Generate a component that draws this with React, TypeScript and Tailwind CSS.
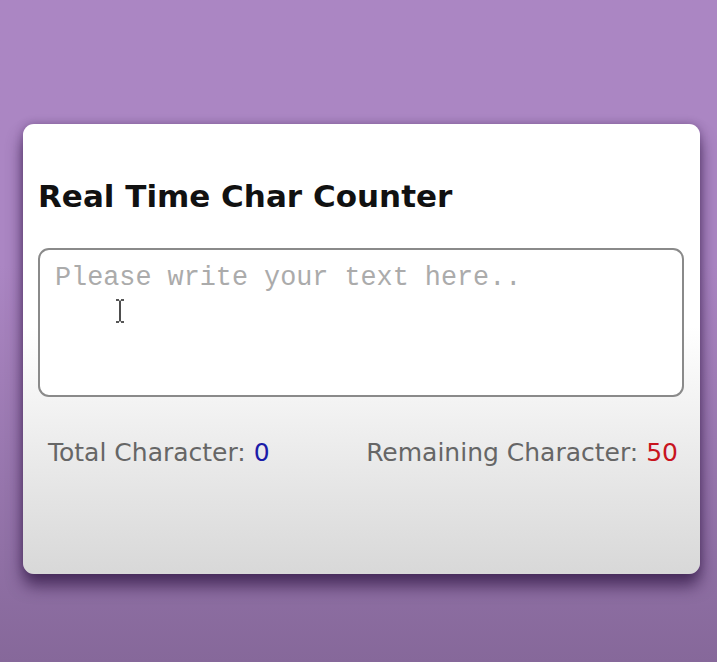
import React, { useState } from "react";

export default function App() {
  const [text, setText] = useState("");
  const max = 50;
  return (
    <div className="w-[717px] h-[662px] overflow-hidden bg-gradient-to-b from-[#ab86c3] from-40% to-[#86689a] pt-[124px] pl-[23px]">
      <div
        className="relative w-[677px] h-[450px] rounded-[11px] bg-gradient-to-b from-white from-45% to-[#d8d8d8] shadow-[0_12px_16px_rgba(45,20,65,0.7),0_0_8px_rgba(60,30,80,0.35)] pt-[52px] px-[15px]"
        style={{ fontFamily: "'Comic Sans MS', 'DejaVu Sans', sans-serif" }}
      >
        <h1 className="text-[31px] font-bold leading-[40px] text-[#111]">
          Real Time Char Counter
        </h1>
        <div className="relative mt-[32px]">
          <textarea
            value={text}
            maxLength={max}
            onChange={(e) => setText(e.target.value)}
            placeholder="Please write your text here.."
            className="block w-[646px] h-[149px] resize-none rounded-[11px] border-2 border-[#8a8a8a] bg-white px-[15px] py-[12px] text-[26.8px] leading-[32px] text-[#333] outline-none placeholder:text-[#ababab]"
            style={{ fontFamily: "'Liberation Mono', 'Courier New', monospace" }}
          />
          <svg
            className="absolute left-[77px] top-[51px] pointer-events-none"
            width="10"
            height="24"
            viewBox="0 0 10 24"
          >
            <path d="M1 1 H4 M6 1 H9 M5 1.5 V22.5 M1 23 H4 M6 23 H9" stroke="#222" strokeWidth="1.6" fill="none" />
          </svg>
        </div>
        <div className="mt-[40px] flex justify-between pl-[10px] pr-[7px] text-[25px] leading-[32px] text-[#666]">
          <span>
            Total Character: <span className="text-[#1c1ca8]">{text.length}</span>
          </span>
          <span>
            Remaining Character: <span className="text-[#c8141e]">{max - text.length}</span>
          </span>
        </div>
      </div>
    </div>
  );
}
